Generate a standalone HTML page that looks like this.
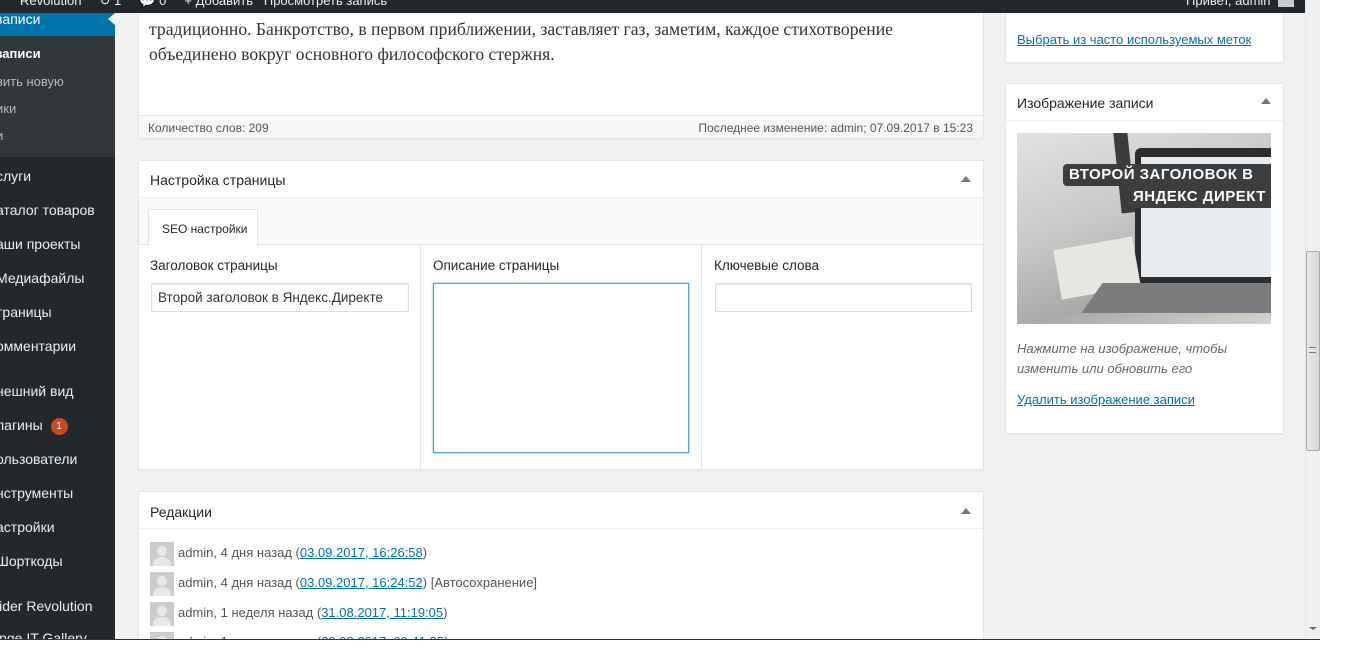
<!DOCTYPE html>
<html><head><meta charset="utf-8"><style>
*{margin:0;padding:0;box-sizing:border-box}
body{width:1366px;height:661px;background:#fff;position:relative;overflow:hidden;font-family:"Liberation Sans",sans-serif;font-size:13px;color:#23282d}
.a{position:absolute}
#page{left:0;top:0;width:1320px;height:640px;background:#f1f1f1;overflow:hidden;border-bottom:1px solid #333}
.side{left:0;top:0;width:115px;height:640px;background:#23282d;color:#eee;font-size:14px}
.side div{position:absolute;left:-4px;white-space:nowrap}
.box{background:#fff;border:1px solid #e5e5e5;box-shadow:0 1px 1px rgba(0,0,0,.04)}
.hd{font-size:14px;color:#23282d}
.tri{width:0;height:0;border-left:5px solid transparent;border-right:5px solid transparent;border-bottom:6px solid #72777c}
a,.lk{color:#0073aa;text-decoration:underline}
.inp{background:#fff;border:1px solid #ddd;box-shadow:inset 0 1px 2px rgba(0,0,0,.07)}
.av{width:24px;height:24px;background:#ccc;overflow:hidden}
.av:before{content:"";position:absolute;left:7px;top:4px;width:10px;height:10px;border-radius:50%;background:#e8e8e8}
.av:after{content:"";position:absolute;left:3px;top:15px;width:18px;height:14px;border-radius:50%;background:#e8e8e8}
.rev{left:178px;font-size:13px;color:#555;white-space:nowrap}
</style></head><body>
<div id="page" class="a">
<div class="a side">
 <div style="top:13px;left:0;width:115px;height:23px;background:#0073aa"></div>
 <div style="top:13px;left:108px;width:0;height:0;border-top:6px solid transparent;border-bottom:6px solid transparent;border-right:7px solid #f1f1f1;"></div>
 <div style="top:36px;left:0;width:115px;height:121px;background:#32373c"></div>
 <div style="top:11px;color:#fff">записи</div>
 <div style="top:46px;color:#fff;font-weight:bold;font-size:13px">записи</div>
 <div style="top:74px;color:#b4b9be;font-size:13px">вить новую</div>
 <div style="top:101px;color:#b4b9be;font-size:13px">ики</div>
 <div style="top:128px;color:#b4b9be;font-size:13px">и</div>
 <div style="top:168px">слуги</div>
 <div style="top:202px">аталог товаров</div>
 <div style="top:236px">аши проекты</div>
 <div style="top:270px">Медиафайлы</div>
 <div style="top:304px">траницы</div>
 <div style="top:338px">омментарии</div>
 <div style="top:383px">нешний вид</div>
 <div style="top:417px">лагины <span style="display:inline-block;width:17px;height:17px;border-radius:50%;background:#ca4a1f;color:#fff;font-size:10px;text-align:center;line-height:17px;margin-left:4px;vertical-align:1px">1</span></div>
 <div style="top:451px">ользователи</div>
 <div style="top:485px">нструменты</div>
 <div style="top:519px">астройки</div>
 <div style="top:553px">Шорткоды</div>
 <div style="top:598px">lider Revolution</div>
 <div style="top:630px">inge IT Gallery</div>
</div>
<div class="a" style="left:0;top:0;width:1320px;height:13px;background:#23282d;color:#eee;font-size:13px;line-height:2px;overflow:hidden">
 <span class="a" style="left:20px;top:-2px;white-space:nowrap;line-height:6px">Revolution &nbsp;&nbsp;&nbsp; ↻ 1 &nbsp;&nbsp;&nbsp; 💬 0 &nbsp;&nbsp;&nbsp; + Добавить &nbsp; Просмотреть запись</span>
 <span class="a" style="left:1186px;top:-2px;line-height:6px">Привет, admin</span>
 <span class="a" style="left:1278px;top:0;width:16px;height:7px;background:#ccc"></span>
</div>
<!-- editor -->
<div class="a box" style="left:138px;top:13px;width:846px;height:126px;border-top:none">
 <div class="a" style="left:10px;top:4px;font-family:'Liberation Serif',serif;font-size:17.6px;line-height:25px;color:#333;white-space:nowrap">традиционно. Банкротство, в первом приближении, заставляет газ, заметим, каждое стихотворение<br>объединено вокруг основного философского стержня.</div>
 <div class="a" style="left:0;top:102px;width:844px;height:23px;background:#f7f7f7;border-top:1px solid #e5e5e5;font-size:12px;color:#555">
  <span class="a" style="left:9px;top:5px">Количество слов: 209</span>
  <span class="a" style="right:10px;top:5px">Последнее изменение: admin; 07.09.2017 в 15:23</span>
 </div>
</div>
<!-- page settings -->
<div class="a box" style="left:138px;top:160px;width:846px;height:310px">
 <div class="a hd" style="left:11px;top:11px">Настройка страницы</div>
 <div class="a tri" style="left:822px;top:15px"></div>
 <div class="a" style="left:0;top:36px;width:844px;height:48px;background:#f9f9f9;border-top:1px solid #eee;border-bottom:1px solid #e5e5e5"></div>
 <div class="a" style="left:9px;top:48px;width:110px;height:37px;background:#fff;border:1px solid #e5e5e5;border-bottom:none;font-size:12px;padding:12px 0 0 13px">SEO настройки</div>
 <div class="a" style="left:281px;top:84px;width:1px;height:225px;background:#e5e5e5"></div>
 <div class="a" style="left:562px;top:84px;width:1px;height:225px;background:#e5e5e5"></div>
 <div class="a hd" style="left:11px;top:97px;font-size:13.5px">Заголовок страницы</div>
 <div class="a hd" style="left:294px;top:97px;font-size:13.5px">Описание страницы</div>
 <div class="a hd" style="left:575px;top:97px;font-size:13.5px">Ключевые слова</div>
 <div class="a inp" style="left:12px;top:122px;width:258px;height:29px;padding:6px 6px;font-size:13.5px;color:#333;white-space:nowrap">Второй заголовок в Яндекс.Директе</div>
 <div class="a inp" style="left:294px;top:122px;width:256px;height:170px;border-color:#5b9dd9;box-shadow:0 0 2px rgba(30,140,190,.8)"></div>
 <div class="a inp" style="left:576px;top:122px;width:257px;height:29px"></div>
</div>
<!-- revisions -->
<div class="a box" style="left:138px;top:491px;width:846px;height:170px">
 <div class="a hd" style="left:11px;top:12px">Редакции</div>
 <div class="a tri" style="left:822px;top:16px"></div>
 <div class="a" style="left:0;top:36px;width:844px;height:1px;background:#eee"></div>
</div>
<div class="a av" style="left:150px;top:542px"></div><div class="a rev" style="top:545px">admin, 4 дня назад (<span class="lk">03.09.2017, 16:26:58</span>)</div>
<div class="a av" style="left:150px;top:572px"></div><div class="a rev" style="top:575px">admin, 4 дня назад (<span class="lk">03.09.2017, 16:24:52</span>) [Автосохранение]</div>
<div class="a av" style="left:150px;top:602px"></div><div class="a rev" style="top:605px">admin, 1 неделя назад (<span class="lk">31.08.2017, 11:19:05</span>)</div>
<div class="a av" style="left:150px;top:632px"></div><div class="a rev" style="top:634px">admin, 1 неделя назад (<span class="lk">29.08.2017, 09:41:35</span>)</div>
<!-- right -->
<div class="a box" style="left:1005px;top:13px;width:279px;height:50px;border-top:none">
 <div class="a lk" style="left:11px;top:19px;white-space:nowrap">Выбрать из часто используемых меток</div>
</div>
<div class="a box" style="left:1005px;top:83px;width:279px;height:351px">
 <div class="a hd" style="left:11px;top:11px">Изображение записи</div>
 <div class="a tri" style="left:255px;top:14px"></div>
 <div class="a" style="left:0;top:36px;width:277px;height:1px;background:#eee"></div>
 <div class="a" style="left:11px;top:49px;width:254px;height:191px;overflow:hidden;background:linear-gradient(160deg,#e2e2e0 0%,#c9cac8 40%,#a9aaa8 70%,#d4d2cc 100%)">
  <div class="a" style="left:100px;top:-10px;width:14px;height:90px;background:#3a3c3a;transform:rotate(-6deg)"></div>
  <div class="a" style="left:118px;top:15px;width:150px;height:135px;background:#2b2d2f;border-radius:6px"></div>
  <div class="a" style="left:124px;top:24px;width:140px;height:120px;background:#e7ecf0"></div>
  <div class="a" style="left:40px;top:110px;width:80px;height:50px;background:#e8e6e0;transform:rotate(-10deg)"></div>
  <div class="a" style="left:75px;top:150px;width:190px;height:30px;background:#7a7c7e;transform:skewX(-35deg)"></div>
  <div class="a" style="left:46px;top:31px;width:208px;height:22px;background:#3b3d3f;border-radius:4px 0 0 4px"></div>
  <div class="a" style="left:111px;top:53px;width:143px;height:22px;background:#3b3d3f"></div>
  <div class="a" style="left:52px;top:33px;color:#fff;font-weight:bold;font-size:15px;white-space:nowrap;letter-spacing:.5px">ВТОРОЙ ЗАГОЛОВОК В</div>
  <div class="a" style="left:116px;top:55px;color:#fff;font-weight:bold;font-size:15px;white-space:nowrap;letter-spacing:.5px">ЯНДЕКС ДИРЕКТ</div>
 </div>
 <div class="a" style="left:11px;top:255px;font-style:italic;color:#666;line-height:20px">Нажмите на изображение, чтобы<br>изменить или обновить его</div>
 <div class="a lk" style="left:11px;top:308px">Удалить изображение записи</div>
</div>
<!-- scrollbar -->
<div class="a" style="left:1305px;top:0;width:15px;height:640px;background:#f0f0f0;border-left:1px solid #e6e6e6"></div>
<div class="a" style="left:1306px;top:251px;width:14px;height:200px;background:linear-gradient(90deg,#e8e8e8,#d8d8dc);border:1px solid #aaa;border-radius:2px"></div>
<div class="a" style="left:1309px;top:347px;width:7px;height:6px;border-top:1px solid #777;border-bottom:1px solid #777"></div>
<div class="a" style="left:1309px;top:627px;width:0;height:0;border-left:4px solid transparent;border-right:4px solid transparent;border-top:3px solid #666"></div>
</div>
</body></html>
